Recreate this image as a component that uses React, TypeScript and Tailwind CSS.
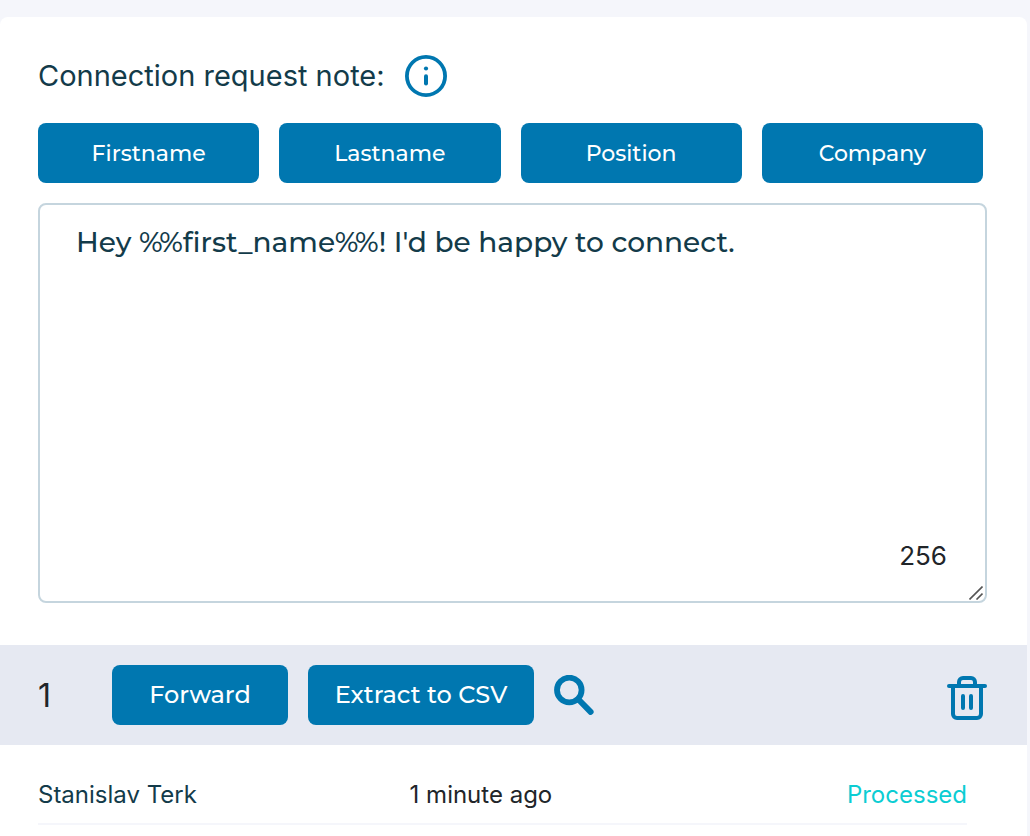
import { useState } from "react";

const placeholders = [
  { label: "Firstname", token: "%%first_name%%" },
  { label: "Lastname", token: "%%last_name%%" },
  { label: "Position", token: "%%position%%" },
  { label: "Company", token: "%%company%%" },
];

const rows = [{ name: "Stanislav Terk", time: "1 minute ago", status: "Processed" }];

function InfoIcon() {
  return (
    <svg width="42" height="42" viewBox="0 0 42 42" fill="none" aria-hidden="true">
      <circle cx="21" cy="21" r="19.1" stroke="#0077b0" strokeWidth="3.8" />
      <circle cx="21" cy="13.5" r="2.1" fill="#0077b0" />
      <path d="M21 21.2v7.3" stroke="#0077b0" strokeWidth="4" strokeLinecap="round" />
    </svg>
  );
}

function SearchIcon() {
  return (
    <svg width="40" height="40" viewBox="0 0 40 40" fill="none" aria-hidden="true">
      <circle cx="15.3" cy="15" r="12.3" stroke="#0077b0" strokeWidth="5.8" />
      <path d="M24.5 24.5L36.6 36.9" stroke="#0077b0" strokeWidth="6" strokeLinecap="round" />
    </svg>
  );
}

function TrashIcon() {
  return (
    <svg
      width="40"
      height="44"
      viewBox="0 0 40 44"
      fill="none"
      stroke="#0077b0"
      strokeWidth="4"
      strokeLinecap="round"
      aria-hidden="true"
    >
      <path d="M2 10h36" />
      <path d="M12 10V6a4 4 0 0 1 4-4h8a4 4 0 0 1 4 4v4" />
      <path d="M6 10v28a4 4 0 0 0 4 4h20a4 4 0 0 0 4-4V10" />
      <path d="M16 20v12M24 20v12" />
    </svg>
  );
}

function ResizeGrip() {
  return (
    <svg width="14" height="14" viewBox="0 0 14 14" stroke="#555" strokeWidth="1.6" aria-hidden="true">
      <path d="M0.5 13.5L13.5 0.5M7.5 13.5L13.5 7.5" />
    </svg>
  );
}

export default function App() {
  const [note, setNote] = useState("Hey %%first_name%%! I'd be happy to connect.");

  return (
    <div className="min-h-screen bg-[#f5f6fb] pt-[17px] pr-[3px] font-['Inter',sans-serif] text-[#212529]">
      <main className="min-h-[819px] rounded-t-lg bg-white">
        <section className="pt-[38px] pr-10 pb-[42px] pl-[38px]">
          <div className="flex items-center gap-5">
            <label htmlFor="note" className="text-[29px] leading-[42px] text-[#133b4a]">
              Connection request note:
            </label>
            <button type="button" aria-label="About the note">
              <InfoIcon />
            </button>
          </div>

          <div className="mt-[26px] mr-1 grid grid-cols-4 gap-5">
            {placeholders.map((p) => (
              <button
                key={p.label}
                type="button"
                onClick={() => setNote(note + p.token)}
                className="h-[60px] rounded-lg bg-[#0077b0] font-['Montserrat','Inter',sans-serif] text-[22px] font-medium text-white"
              >
                {p.label}
              </button>
            ))}
          </div>

          <div className="relative mt-5">
            <textarea
              id="note"
              value={note}
              onChange={(e) => setNote(e.target.value)}
              className="block h-[400px] w-full resize-none rounded-lg border-2 border-[#c5d5de] bg-white px-9 py-[18px] font-['Montserrat','Inter',sans-serif] text-[28px] leading-[38px] font-medium text-[#133b4a] outline-none"
            />
            <span className="absolute right-10 bottom-7 text-[26px] leading-[38px]">256</span>
            <span className="pointer-events-none absolute right-1 bottom-[3px]">
              <ResizeGrip />
            </span>
          </div>
        </section>

        <section className="flex h-[100px] items-center bg-[#e6e9f2] pr-10 pl-[38px]">
          <span className="w-[74px] pt-0.5 text-[32px]">1</span>
          <button
            type="button"
            className="h-[60px] w-44 rounded-lg bg-[#0077b0] font-['Montserrat','Inter',sans-serif] text-2xl font-medium text-white"
          >
            Forward
          </button>
          <button
            type="button"
            className="ml-5 h-[60px] w-[226px] rounded-lg bg-[#0077b0] font-['Montserrat','Inter',sans-serif] text-2xl font-medium text-white"
          >
            Extract to CSV
          </button>
          <button type="button" aria-label="Search" className="ml-5">
            <SearchIcon />
          </button>
          <button type="button" aria-label="Delete" className="mt-1.5 ml-auto">
            <TrashIcon />
          </button>
        </section>

        <section className="pr-[60px] pl-[38px]">
          <table className="w-full table-fixed text-left text-2xl">
            <tbody>
              {rows.map((row) => (
                <tr key={row.name} className="border-b-2 border-[#f5f6fb]">
                  <td className="w-2/5 pt-[34px] pb-3 text-[#133b4a]">{row.name}</td>
                  <td className="pt-[34px] pb-3">{row.time}</td>
                  <td className="pt-[34px] pb-3 text-right text-[#0ccdd3]">{row.status}</td>
                </tr>
              ))}
            </tbody>
          </table>
        </section>
      </main>
    </div>
  );
}
